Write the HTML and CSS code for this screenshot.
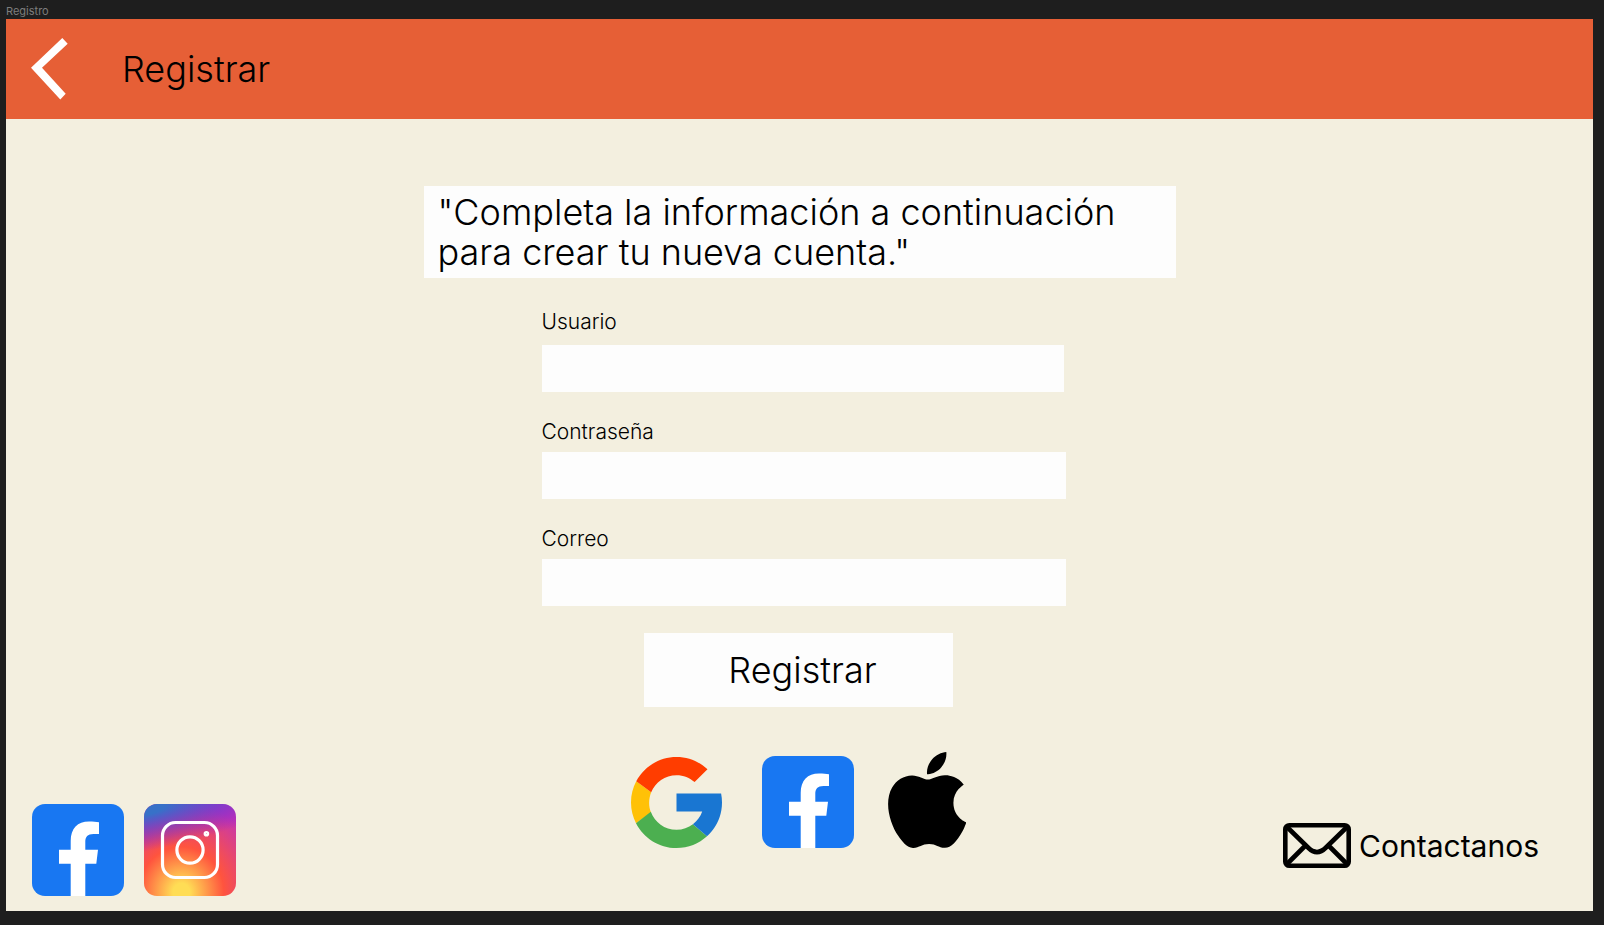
FILE: index.html
```html
<!DOCTYPE html>
<html lang="es">
<head>
<meta charset="utf-8">
<meta name="viewport" content="width=device-width, initial-scale=1">
<title>Registro</title>
<link rel="stylesheet" href="styles.css">
</head>
<body class="page">
<svg class="defs" width="0" height="0" aria-hidden="true">
  <defs>
    <radialGradient id="ig-warm" cx="0" cy="0" r="1" gradientUnits="userSpaceOnUse" gradientTransform="scale(.359375) matrix(0 -253.715 235.975 0 104 246)">
      <stop offset="0" stop-color="#fd5"/>
      <stop offset=".1" stop-color="#fd5"/>
      <stop offset=".5" stop-color="#ff543e"/>
      <stop offset="1" stop-color="#c837ab"/>
    </radialGradient>
    <radialGradient id="ig-cool" cx="0" cy="0" r="1" gradientUnits="userSpaceOnUse" gradientTransform="scale(.359375) matrix(22.25 111.206 -458.395 91.714 -2 18)">
      <stop offset="0" stop-color="#3771c8"/>
      <stop offset=".128" stop-color="#3771c8"/>
      <stop offset="1" stop-color="#60f" stop-opacity="0"/>
    </radialGradient>
    <symbol id="facebook" viewBox="0 0 92 92">
      <rect width="92" height="92" rx="13" fill="#1877f2"/>
      <path fill="#fff" d="M38.7 92V59.7H27V45.7H38.7V37C38.7 24.5 45.5 17.5 57 17.5C61 17.5 64.5 17.8 67 18.2V30H61.5C55.5 30 53.3 33 53.3 37.5V45.7H66L64.3 59.7H53.3V92Z"/>
    </symbol>
  </defs>
</svg>

<p class="frame-name">Registro</p>

<div class="frame">
  <header class="topbar">
    <button class="back" type="button" aria-label="Volver">
      <svg width="37" height="62" viewBox="0 0 37 62" aria-hidden="true"><path fill="#fff" d="M31.3 0L36.7 5.700L11 29.700L34.7 55.700L29.3 61.400L0 29.700Z"/></svg>
    </button>
    <h1 class="title">Registrar</h1>
  </header>

  <main class="content">
    <p class="intro">"Completa la información a continuación<br>para crear tu nueva cuenta."</p>

    <form class="form">
      <div class="field field-first">
        <label class="label" for="usuario">Usuario</label>
        <input class="input" id="usuario" type="text">
      </div>
      <div class="field">
        <label class="label" for="contrasena">Contraseña</label>
        <input class="input" id="contrasena" type="password">
      </div>
      <div class="field">
        <label class="label" for="correo">Correo</label>
        <input class="input" id="correo" type="email">
      </div>
    </form>
    <button class="submit" type="button">Registrar</button>

    <div class="bottom">
      <nav class="follow" aria-label="Redes sociales">
        <a class="icon-link" href="#" aria-label="Facebook"><svg width="92" height="92"><use href="#facebook"/></svg></a>
        <a class="icon-link" href="#" aria-label="Instagram">
          <svg width="92" height="92" viewBox="0 0 92 92">
            <rect width="92" height="92" rx="13" fill="url(#ig-warm)"/>
            <rect width="92" height="92" rx="13" fill="url(#ig-cool)"/>
            <g fill="none" stroke="#fff" stroke-width="3.2">
              <rect x="18.5" y="18.5" width="55" height="55" rx="13"/>
              <circle cx="46" cy="46" r="13.1"/>
            </g>
            <circle cx="62.4" cy="29.7" r="1.6" fill="none" stroke="#fff" stroke-width="2.4"/>
          </svg>
        </a>
      </nav>

      <div class="providers">
        <button class="icon-link" type="button" aria-label="Google">
          <svg width="91" height="91" viewBox="4 4 40 40">
            <path fill="#FFC107" d="M4 24C4 20.7 4.8 17.5 6.306 14.691L12.877 19.51C11.7 22.5 11.7 25.8 12.8 28.4L6.195 33.079C4.8 30.3 4 27.3 4 24Z"/>
            <path fill="#FF3D00" d="M6.306 14.691L12.877 19.51C14.655 15.108 18.961 12 24 12C27.059 12 29.842 13.154 31.961 15.039L37.618 9.382C34.046 6.053 29.268 4 24 4C16.318 4 9.656 8.337 6.306 14.691Z"/>
            <path fill="#4CAF50" d="M24 44C29.166 44 33.86 42.023 37.409 38.808L31.219 33.57C29.211 35.091 26.715 36 24 36C18.798 36 14.381 32.683 12.717 28.054L6.195 33.079C9.505 39.556 16.227 44 24 44Z"/>
            <path fill="#1976D2" d="M43.611 20.083H24V28H35.303C34.511 30.237 33.072 32.166 31.216 33.571L37.409 38.808C36.971 39.205 44 34 44 24C44 22.659 43.862 21.35 43.611 20.083Z"/>
          </svg>
        </button>
        <button class="icon-link" type="button" aria-label="Facebook"><svg width="92" height="92"><use href="#facebook"/></svg></button>
        <button class="icon-link apple" type="button" aria-label="Apple">
          <svg width="78" height="96" viewBox="2.2 0 19.5 24"><path d="M12.152 6.896c-.948 0-2.415-1.078-3.96-1.04-2.04.027-3.91 1.183-4.961 3.014-2.117 3.675-.546 9.103 1.519 12.09 1.013 1.454 2.208 3.09 3.792 3.039 1.52-.065 2.09-.987 3.935-.987 1.831 0 2.35.987 3.96.948 1.637-.026 2.676-1.48 3.676-2.948 1.156-1.688 1.636-3.325 1.662-3.415-.039-.013-3.182-1.221-3.22-4.857-.026-3.04 2.48-4.494 2.597-4.559-1.429-2.09-3.623-2.324-4.39-2.376-2-.156-3.675 1.09-4.61 1.09zM15.53 3.83c.843-1.012 1.4-2.427 1.245-3.83-1.207.052-2.662.805-3.532 1.818-.78.896-1.454 2.338-1.273 3.714 1.338.104 2.715-.688 3.559-1.701"/></svg>
        </button>
      </div>

      <a class="contact" href="#">
        <svg width="68" height="45" viewBox="0 0 68 45" fill="none" stroke="#000" stroke-width="4.600" aria-hidden="true">
          <rect x="2.3" y="2.3" width="63.4" height="40.4" rx="4"/>
          <path d="M3.5 3.5L25 24.5Q34 33.5 43 24.5L64.5 3.5M3.5 41.5L22.5 22.5M64.5 41.5L45.5 22.5"/>
        </svg>
        <span>Contactanos</span>
      </a>
    </div>
  </main>
</div>
</body>
</html>
```
FILE: styles.css
```css
* { box-sizing: border-box; }

.page {
  margin: 0;
  min-height: 100vh;
  padding: 0 11px 14px 6px;
  display: flex;
  flex-direction: column;
  background: #1e1e1e;
  color: #000;
  font-family: Inter, "Liberation Sans", sans-serif;
}

.defs { position: absolute; }

.frame-name {
  margin: 0;
  padding-top: 3px;
  height: 19px;
  font-size: 11px;
  line-height: 16px;
  color: #7d7d7d;
}

.frame {
  flex: 1;
  display: flex;
  flex-direction: column;
  background: #f3efdf;
}

.topbar {
  height: 100px;
  padding: 0 25px;
  display: flex;
  align-items: center;
  gap: 54px;
  background: #e65f36;
}

.back,
.icon-link {
  display: block;
  padding: 0;
  border: 0;
  background: none;
  cursor: pointer;
}

.back svg,
.icon-link svg { display: block; }

.title {
  margin: 0;
  font-size: 36px;
  line-height: 40px;
  font-weight: 300;
}

.content {
  flex: 1;
  padding: 67px 26px 15px;
  display: flex;
  flex-direction: column;
  align-items: center;
}

.intro {
  width: 100%;
  max-width: 752px;
  margin: 0 0 32px;
  padding: 6px 14px;
  background: #fdfdfd;
  font-size: 36px;
  line-height: 40px;
  font-weight: 300;
}

.form {
  width: 100%;
  max-width: 532px;
  padding-left: 8px;
  display: flex;
  flex-direction: column;
  gap: 28px;
}

.field {
  display: flex;
  flex-direction: column;
  gap: 8px;
}

.field-first {
  gap: 11px;
  padding-right: 2px;
}

.label {
  font-size: 21px;
  line-height: 24px;
  font-weight: 300;
}

.input {
  width: 100%;
  height: 47px;
  padding: 0 12px;
  border: 0;
  background: #fdfdfd;
  font: inherit;
  font-size: 21px;
}

.submit {
  width: 309px;
  height: 74px;
  margin: 27px 2px 45px 0;
  padding: 0 0 0 8px;
  border: 0;
  background: #fdfdfd;
  color: #000;
  font: inherit;
  font-size: 36px;
  font-weight: 300;
  cursor: pointer;
}

.bottom {
  flex: 1;
  width: 100%;
  display: grid;
  grid-template-columns: 1fr auto 1fr;
}

.follow {
  display: flex;
  align-self: end;
  gap: 20px;
}

.providers {
  display: flex;
  align-items: flex-end;
  align-self: start;
  gap: 40px;
  margin-right: 2px;
}

.apple { margin-left: -6px; }

.contact {
  display: flex;
  align-items: center;
  align-self: end;
  justify-self: end;
  gap: 8px;
  margin: 0 28px 28px 0;
  color: #000;
  font-size: 30px;
  line-height: 44px;
  font-weight: 400;
  text-decoration: none;
}
```
